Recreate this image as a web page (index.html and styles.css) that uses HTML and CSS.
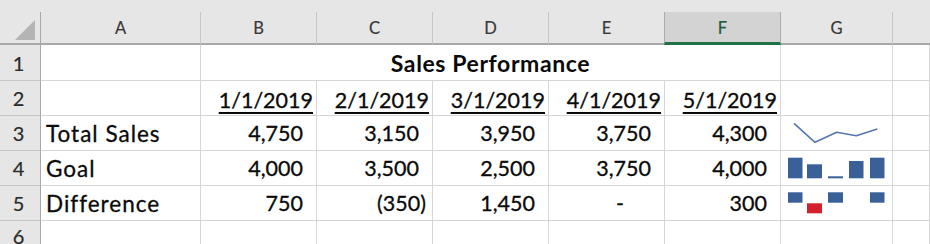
FILE: index.html
```html
<!DOCTYPE html>
<html>
<head>
<meta charset="utf-8">
<link rel="stylesheet" href="styles.css">
</head>
<body>
<div class="sheet">
  <div class="topstrip"></div>

  <div class="corner"><svg width="40" height="32" viewBox="0 0 40 32"><polygon points="35,8 35,28 15,28" fill="#b4b4b4"/></svg></div>
  <div class="colhead">A</div>
  <div class="colhead">B</div>
  <div class="colhead">C</div>
  <div class="colhead">D</div>
  <div class="colhead">E</div>
  <div class="colhead sel">F</div>
  <div class="colhead">G</div>
  <div class="colhead last"></div>

  <div class="rowhead">1</div>
  <div class="cell"></div>
  <div class="cell title">Sales Performance</div>
  <div class="cell"></div>
  <div class="cell"></div>

  <div class="rowhead">2</div>
  <div class="cell"></div>
  <div class="cell date"><span>1/1/2019</span></div>
  <div class="cell date"><span>2/1/2019</span></div>
  <div class="cell date"><span>3/1/2019</span></div>
  <div class="cell date"><span>4/1/2019</span></div>
  <div class="cell date"><span>5/1/2019</span></div>
  <div class="cell"></div>
  <div class="cell"></div>

  <div class="rowhead">3</div>
  <div class="cell label">Total Sales</div>
  <div class="cell num">4,750</div>
  <div class="cell num">3,150</div>
  <div class="cell num">3,950</div>
  <div class="cell num">3,750</div>
  <div class="cell num">4,300</div>
  <div class="cell spark">
    <svg width="110" height="34" viewBox="0 0 110 34"><polyline points="13,7.3 34,26.3 55.7,16.3 75.3,19.7 96.3,13" fill="none" stroke="#5577b0" stroke-width="1.6" stroke-linejoin="round"/></svg>
  </div>
  <div class="cell"></div>

  <div class="rowhead">4</div>
  <div class="cell label">Goal</div>
  <div class="cell num">4,000</div>
  <div class="cell num">3,500</div>
  <div class="cell num">2,500</div>
  <div class="cell num">3,750</div>
  <div class="cell num">4,000</div>
  <div class="cell spark">
    <svg width="110" height="34" viewBox="0 0 110 34">
      <rect x="7" y="6.7" width="14.5" height="20.6" fill="#3a6098"/>
      <rect x="26" y="13.3" width="15" height="14" fill="#3a6098"/>
      <rect x="47" y="25.3" width="15" height="2" fill="#3a6098"/>
      <rect x="68" y="10" width="14.5" height="17.3" fill="#3a6098"/>
      <rect x="89" y="6.7" width="14.5" height="20.6" fill="#3a6098"/>
    </svg>
  </div>
  <div class="cell"></div>

  <div class="rowhead">5</div>
  <div class="cell label">Difference</div>
  <div class="cell num">750</div>
  <div class="cell num neg">(350)</div>
  <div class="cell num">1,450</div>
  <div class="cell num zero">-</div>
  <div class="cell num">300</div>
  <div class="cell spark">
    <svg width="110" height="34" viewBox="0 0 110 34">
      <rect x="7" y="6.3" width="14.5" height="10.4" fill="#3a6098"/>
      <rect x="26" y="17.3" width="15" height="10" fill="#d4202a"/>
      <rect x="47" y="6.3" width="15" height="10.4" fill="#3a6098"/>
      <rect x="89" y="6.3" width="14.5" height="10.4" fill="#3a6098"/>
    </svg>
  </div>
  <div class="cell"></div>

  <div class="rowhead">6</div>
  <div class="cell"></div>
  <div class="cell"></div>
  <div class="cell"></div>
  <div class="cell"></div>
  <div class="cell"></div>
  <div class="cell"></div>
  <div class="cell"></div>
  <div class="cell"></div>
</div>
</body>
</html>
```

FILE: styles.css
```css
html, body {
  margin: 0;
  padding: 0;
  background: #ffffff;
  overflow: hidden;
  width: 930px;
  height: 244px;
}

.sheet {
  display: grid;
  grid-template-columns: 41px 160px 116px 116px 116px 116px 116px 112px 1fr;
  grid-template-rows: 12px 33px 36px 35px 35px 35px 35px 30px;
  font-family: Lato, "Liberation Sans", sans-serif;
  font-size: 21.5px;
  color: #0a0a0a;
}

.topstrip {
  grid-column: 1 / -1;
  background: #e6e6e6;
}

.corner {
  background: #e6e6e6;
  border-right: 1px solid #a8a8a8;
  border-bottom: 2px solid #a8a8a8;
  box-sizing: border-box;
}

.corner svg {
  display: block;
}

.colhead {
  background: #e6e6e6;
  border-right: 1px solid #c6c6c6;
  border-bottom: 2px solid #a8a8a8;
  box-sizing: border-box;
  display: flex;
  align-items: center;
  justify-content: center;
  font-size: 16.5px;
  color: #383838;
  padding-top: 1px;
  -webkit-text-stroke: 0.2px #383838;
}

.colhead.last {
  border-right: none;
}

.colhead.sel {
  background: #d3d3d3;
  color: #1f5a36;
  -webkit-text-stroke: 0.2px #1f5a36;
  border-bottom: 3px solid #217346;
  border-right-color: #ababab;
  border-left: 1px solid #ababab;
  margin-left: -1px;
}

.rowhead {
  background: #e6e6e6;
  border-right: 1px solid #a8a8a8;
  border-bottom: 1px solid #c6c6c6;
  box-sizing: border-box;
  display: flex;
  align-items: center;
  justify-content: center;
  font-size: 20px;
  color: #2a2a2a;
  padding-right: 3px;
  -webkit-text-stroke: 0.2px #2a2a2a;
}

.cell {
  border-right: 1px solid #d6d6d6;
  border-bottom: 1px solid #d6d6d6;
  box-sizing: border-box;
  display: flex;
  align-items: center;
  white-space: nowrap;
  overflow: visible;
  -webkit-text-stroke: 0.3px #0a0a0a;
}

.title {
  grid-column: 3 / 8;
  justify-content: center;
  font-weight: bold;
  font-size: 23px;
  letter-spacing: 0.6px;
  padding-top: 1px;
  -webkit-text-stroke: 0;
}

.label {
  padding-left: 5px;
  font-size: 22.5px;
  letter-spacing: 1px;
}

.date {
  justify-content: flex-end;
  padding-right: 3px;
  padding-top: 4px;
}

.date span {
  text-decoration: underline;
  text-decoration-thickness: 2px;
  text-underline-offset: 4px;
}

.num {
  justify-content: flex-end;
  padding-right: 13px;
}

.num.neg {
  padding-right: 6px;
}

.num.zero {
  padding-right: 40px;
}

.spark svg {
  display: block;
}
```
